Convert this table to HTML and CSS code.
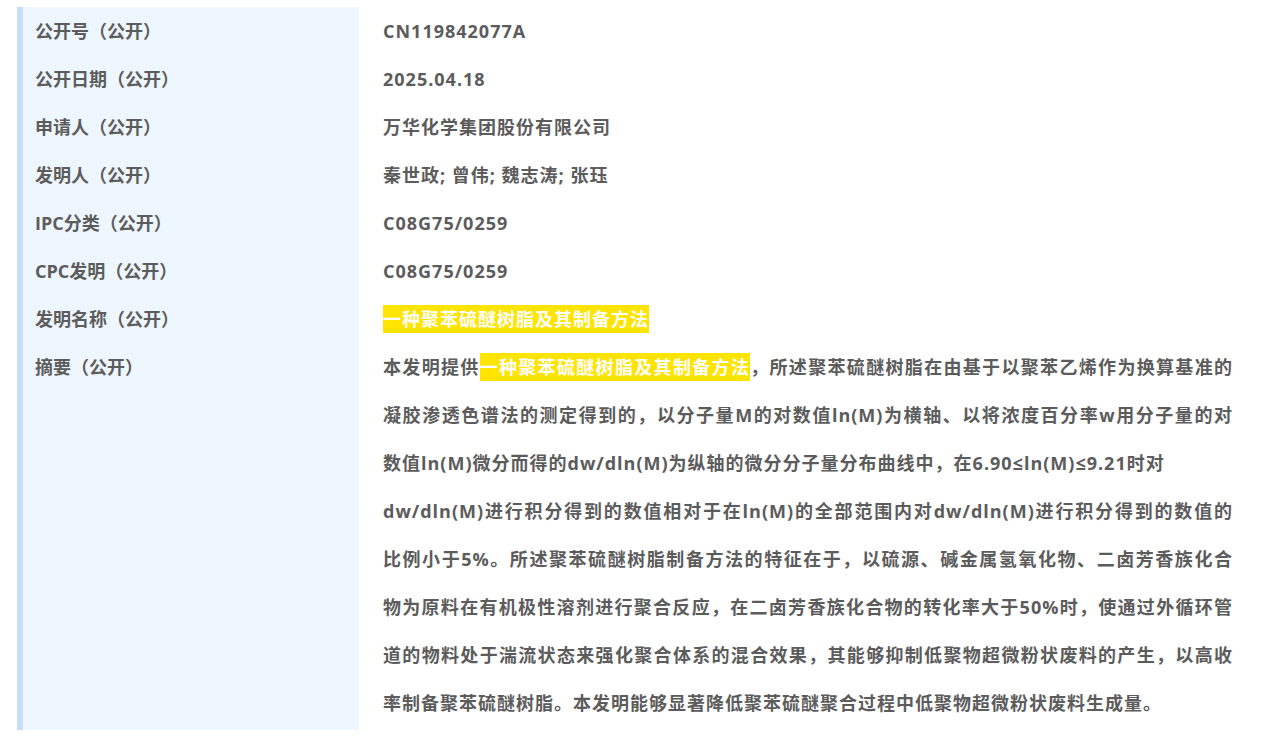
FILE: index.html
```html
<!DOCTYPE html>
<html lang="zh-CN">
<head>
    <meta charset="UTF-8">
    <meta name="viewport" content="width=device-width, initial-scale=1.0">
    <title>专利详情</title>
    <link rel="stylesheet" href="styles.css">
</head>
<body>
    <div class="patent-info">
        <div class="label">公开号（公开）</div>
        <div class="value">CN119842077A</div>

        <div class="label">公开日期（公开）</div>
        <div class="value">2025.04.18</div>

        <div class="label">申请人（公开）</div>
        <div class="value">万华化学集团股份有限公司</div>

        <div class="label">发明人（公开）</div>
        <div class="value">秦世政; 曾伟; 魏志涛; 张珏</div>

        <div class="label">IPC分类（公开）</div>
        <div class="value">C08G75/0259</div>

        <div class="label">CPC发明（公开）</div>
        <div class="value">C08G75/0259</div>

        <div class="label">发明名称（公开）</div>
        <div class="value"><span class="highlight">一种聚苯硫醚树脂及其制备方法</span></div>

        <div class="label">摘要（公开）</div>
        <div class="value abstract">
            <span class="line">本发明提供<span class="highlight">一种聚苯硫醚树脂及其制备方法</span>，所述聚苯硫醚树脂在由基于以聚苯乙烯作为换算基准的</span>
            <span class="line">凝胶渗透色谱法的测定得到的，以分子量M的对数值ln(M)为横轴、以将浓度百分率w用分子量的对</span>
            <span class="line line-short">数值ln(M)微分而得的dw/dln(M)为纵轴的微分分子量分布曲线中，在6.90≤ln(M)≤9.21时对</span>
            <span class="line">dw/dln(M)进行积分得到的数值相对于在ln(M)的全部范围内对dw/dln(M)进行积分得到的数值的</span>
            <span class="line">比例小于5%。所述聚苯硫醚树脂制备方法的特征在于，以硫源、碱金属氢氧化物、二卤芳香族化合</span>
            <span class="line">物为原料在有机极性溶剂进行聚合反应，在二卤芳香族化合物的转化率大于50%时，使通过外循环管</span>
            <span class="line">道的物料处于湍流状态来强化聚合体系的混合效果，其能够抑制低聚物超微粉状废料的产生，以高收</span>
            <span class="line line-short">率制备聚苯硫醚树脂。本发明能够显著降低聚苯硫醚聚合过程中低聚物超微粉状废料生成量。</span>
        </div>
    </div>
</body>
</html>
```

FILE: styles.css
```css
body {
    margin: 0;
    padding: 7px 0 0 17px;
    background-color: #ffffff;
    color: #5c5c5c; /* gray text */
    font-family: "Open Sans", "Noto Sans CJK SC", sans-serif;
    font-weight: bold;
    font-size: 18px;
}

.patent-info {
    display: grid;
    grid-template-columns: 342px 874px;
}

.label {
    background-color: #eef6ff; /* light blue column */
    border-left: 6px solid #c6dcf7;
    padding-left: 12px;
    min-height: 48px;
    line-height: 48px;
    white-space: nowrap;
}

.value {
    padding-left: 24px;
    line-height: 48px;
    letter-spacing: 1px;
}

.abstract {
    padding-bottom: 3px;
}

.abstract .line {
    display: block;
    white-space: nowrap;
    text-align: justify;
    text-align-last: justify;
}

/* lines that keep their natural width */
.abstract .line-short {
    text-align-last: auto;
}

.highlight {
    background-color: #ffe400; /* yellow mark */
    color: #ffffff;
    padding: 2px 0;
}
```
